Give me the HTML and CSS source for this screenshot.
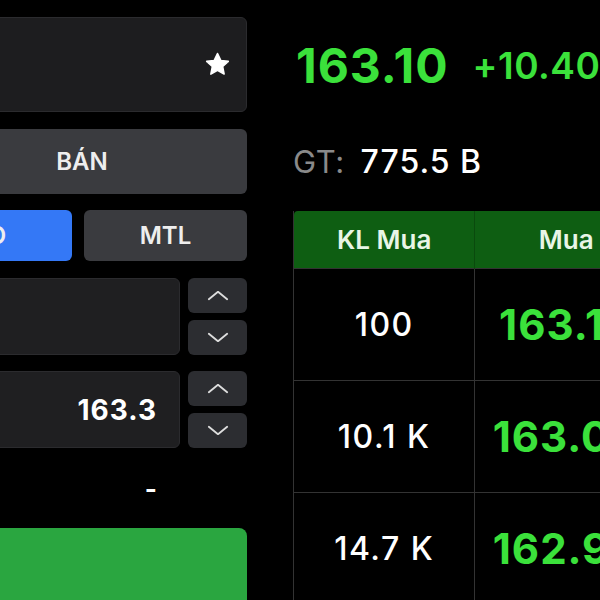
FILE: index.html
```html
<!DOCTYPE html>
<html>
<head>
    <meta charset="utf-8">
    <title>Đặt lệnh</title>
    <link rel="stylesheet" href="styles.css">
</head>
<body>
    <div class="screen">
        <div class="order-panel">
            <div class="symbol-box">
                <svg class="star" viewBox="0 0 24 24" width="27" height="27">
                    <path d="M12 2.2l2.9 6.2 6.7.8-5 4.6 1.3 6.7L12 17.2l-5.9 3.3 1.3-6.7-5-4.6 6.7-.8z" fill="#fff" stroke="#fff" stroke-width="1.4" stroke-linejoin="round"/>
                </svg>
            </div>

            <button class="side-btn">BÁN</button>

            <div class="type-row">
                <button class="type-btn active">LO</button>
                <button class="type-btn">MTL</button>
            </div>

            <div class="field-row">
                <div class="field"></div>
                <div class="stepper">
                    <button class="step"><svg viewBox="0 0 24 12" width="22" height="11"><path d="M2 10L12 2l10 8" fill="none" stroke="#ddd" stroke-width="2" stroke-linecap="round" stroke-linejoin="round"/></svg></button>
                    <button class="step"><svg viewBox="0 0 24 12" width="22" height="11"><path d="M2 2l10 8 10-8" fill="none" stroke="#ddd" stroke-width="2" stroke-linecap="round" stroke-linejoin="round"/></svg></button>
                </div>
            </div>

            <div class="field-row">
                <div class="field">163.3</div>
                <div class="stepper">
                    <button class="step"><svg viewBox="0 0 24 12" width="22" height="11"><path d="M2 10L12 2l10 8" fill="none" stroke="#ddd" stroke-width="2" stroke-linecap="round" stroke-linejoin="round"/></svg></button>
                    <button class="step"><svg viewBox="0 0 24 12" width="22" height="11"><path d="M2 2l10 8 10-8" fill="none" stroke="#ddd" stroke-width="2" stroke-linecap="round" stroke-linejoin="round"/></svg></button>
                </div>
            </div>

            <div class="total">-</div>

            <button class="submit-btn"></button>
        </div>

        <div class="market">
            <div class="quote">
                <span class="price">163.10</span>
                <span class="change">+10.40</span>
            </div>
            <div class="value-row">
                <span class="label">GT:</span>
                <span class="value">775.5 B</span>
            </div>

            <table class="book">
                <thead>
                    <tr>
                        <th>KL Mua</th>
                        <th>Mua</th>
                    </tr>
                </thead>
                <tbody>
                    <tr>
                        <td class="vol">100</td>
                        <td class="bid">163.10</td>
                    </tr>
                    <tr>
                        <td class="vol">10.1 K</td>
                        <td class="bid">163.00</td>
                    </tr>
                    <tr>
                        <td class="vol">14.7 K</td>
                        <td class="bid">162.90</td>
                    </tr>
                </tbody>
            </table>
        </div>
    </div>
</body>
</html>
```

FILE: styles.css
```css
body {
    margin: 0;
    background: #000;
    color: #fff;
    font-family: Inter, "Liberation Sans", sans-serif;
    overflow: hidden;
    height: 600px;
}
.screen {
    display: flex;
    margin-left: -91px;
    width: 800px;
}
button {
    font-family: inherit;
    border: none;
    color: #eee;
    cursor: pointer;
}

/* order panel */
.order-panel {
    width: 338px;
    flex: none;
    padding-top: 17px;
    display: flex;
    flex-direction: column;
}
.symbol-box {
    height: 93px;
    background: #1d1d1f;
    border: 1px solid #2b2b2e;
    border-radius: 6px;
    display: flex;
    align-items: center;
    justify-content: flex-end;
    padding-right: 15px;
}
.side-btn {
    margin-top: 17px;
    height: 65px;
    background: #3a3b3f;
    border-radius: 6px;
    font-size: 24px;
    font-weight: 600;
    padding-left: 14px;
}
.type-row {
    margin-top: 16px;
    display: flex;
    gap: 12px;
}
.type-btn {
    flex: 1;
    height: 51px;
    background: #3a3b3f;
    border-radius: 6px;
    font-size: 24px;
    font-weight: 600;
}
.type-btn.active {
    background: #3478f6;
}
.field-row {
    display: flex;
    gap: 8px;
    margin-top: 17px;
    height: 77px;
}
.field-row + .field-row {
    margin-top: 16px;
}
.field {
    flex: 1;
    background: #1f1f21;
    border: 1px solid #2b2b2e;
    border-radius: 6px;
    display: flex;
    align-items: center;
    justify-content: flex-end;
    padding-right: 22px;
    font-size: 28px;
    font-weight: 700;
    letter-spacing: 1px;
}
.stepper {
    width: 59px;
    display: flex;
    flex-direction: column;
    gap: 7px;
}
.step {
    flex: 1;
    background: #2c2d31;
    border-radius: 6px;
    display: flex;
    align-items: center;
    justify-content: center;
    padding: 0;
}
.total {
    height: 80px;
    display: flex;
    align-items: center;
    justify-content: flex-end;
    padding-right: 90px;
    font-size: 26px;
    font-weight: 700;
}
.submit-btn {
    height: 90px;
    background: #2aa640;
    border-radius: 8px;
}

/* market side */
.market {
    margin-left: 46px;
    width: 420px;
    flex: none;
}
.quote {
    height: 130px;
    display: flex;
    align-items: center;
    gap: 24px;
    padding-left: 3px;
    white-space: nowrap;
}
.price {
    font-size: 48px;
    font-weight: 700;
    letter-spacing: 1px;
    color: #3be13b;
}
.change {
    font-size: 37px;
    font-weight: 600;
    letter-spacing: 0.5px;
    color: #3be13b;
}
.value-row {
    height: 62px;
    display: flex;
    align-items: center;
    gap: 16px;
    font-size: 31px;
    letter-spacing: 0.5px;
}
.label {
    color: #8a8a8a;
}
.value {
    font-size: 32px;
    font-weight: 500;
    letter-spacing: 1px;
}
.book {
    margin-top: 19px;
    border-collapse: collapse;
    width: 364px;
    border-left: 1px solid #333;
}
.book th {
    background: #0e5e12;
    height: 57px;
    font-size: 26px;
    font-weight: 600;
    color: #e8f5e6;
    width: 182px;
    padding: 0;
    border-left: 1px solid #0a4a0d;
}
.book th:first-child {
    border-left: none;
    border-top-left-radius: 4px;
}
.book td {
    height: 111px;
    text-align: center;
    border-top: 1px solid #333;
    border-left: 1px solid #333;
    padding: 0;
}
.book td.vol {
    font-size: 32px;
    font-weight: 500;
    letter-spacing: 1.5px;
    border-left: none;
}
.book td.bid {
    font-size: 42px;
    font-weight: 700;
    letter-spacing: 1px;
    color: #3be13b;
}
```
